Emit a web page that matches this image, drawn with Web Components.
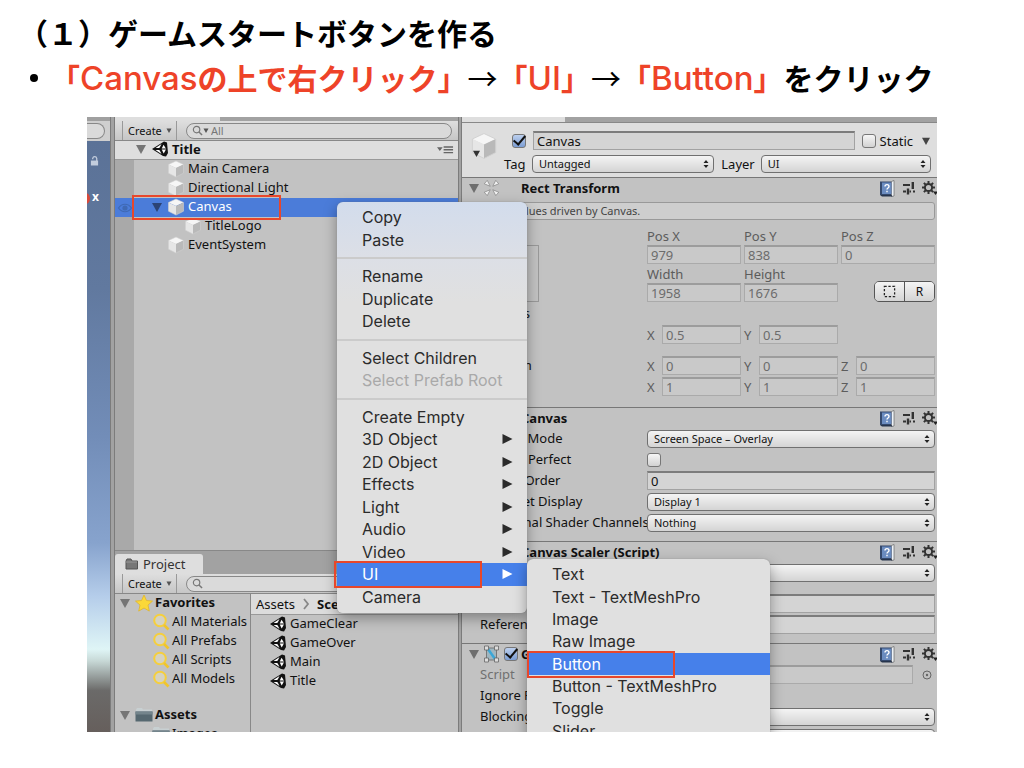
<!DOCTYPE html>
<html lang="ja">
<head>
<meta charset="utf-8">
<title>ゲームスタートボタンを作る</title>
<style>
  html, body { margin: 0; background: #fff; }
  body { font-family: "Noto Sans", "Noto Sans CJK JP", sans-serif; }
</style>
</head>
<body>
<lesson-slide>
  <span slot="heading">（１）ゲームスタートボタンを作る</span>
  <unity-editor></unity-editor>
</lesson-slide>

<script>
const define = (name, html, setup) => {
  const tpl = document.createElement('template');
  tpl.innerHTML = html;
  customElements.define(name, class extends HTMLElement {
    connectedCallback() {
      if (this.shadowRoot) return;
      const root = this.attachShadow({ mode: 'open' });
      root.append(tpl.content.cloneNode(true));
      if (setup) setup(root, this);
    }
  });
};

/* ---------- icons ---------- */
const ICONS = {
  cube: ['0 0 18 18', '<path d="M9 1 16.500 4.500 9 8 1.500 4.500z" fill="#f6f6f6"/><path d="M1.500 4.500 9 8v9L1.500 13.200z" fill="#e6e6e6"/><path d="M16.500 4.500 9 8v9l7.500-3.800z" fill="#b9b9b9"/><path d="M1.500 4.500 9 1l7.500 3.500v8.700L9 17l-7.500-3.800z" fill="none" stroke="#d0d0d0" stroke-width=".6"/>'],
  unity: ['0 0 18 18', '<path d="M1 9 13 1.500 16 2.500 17 13 15 16.500 12 16z" fill="#111"/><path d="M4.500 8 10.500 4 8.500 8zM4.500 10h4l2 4zM10.500 9 12.600 4.800 15.200 9l-2.500 4.500z" fill="#fff"/><path d="M10.500 9h4.700M8.500 8l2 1-2 1" stroke="#111" fill="none" stroke-width="1.200"/>'],
  tri: ['0 0 10 10', '<path d="M0 1h10L5 10z" fill="currentColor"/>'],
  magnifier: ['0 0 18 18', '<circle cx="8" cy="7.500" r="5.800" fill="#e8e2c0" fill-opacity=".5" stroke="#f5cf3c" stroke-width="2"/><path d="m12 12 4.500 4.500" stroke="#f0c52c" stroke-width="2.600"/>'],
  search: ['0 0 12 12', '<circle cx="5" cy="5" r="3.500" fill="none" stroke="#777" stroke-width="1.300"/><path d="m7.600 7.600 3.400 3.400" stroke="#777" stroke-width="1.600"/>'],
  star: ['0 0 18 18', '<path d="m9 1 2.500 5.500 6 .6-4.500 4 1.300 6L9 14l-5.300 3.100L5 11.100.5 7.100l6-.6z" fill="#fbd838" stroke="#e0b52a" stroke-width=".8"/>'],
  folder: ['0 0 18 18', '<path d="M1 3.500 2 2h5l1 1.500h9V15H1z" fill="#c8d0d2"/><path d="M0.500 5.500h17V15.500h-17z" fill="#566870"/><path d="M.5 5.500h17v3H.5z" fill="#74858c"/>'],
  tabfolder: ['0 0 14 14', '<path d="M1 4V12h11.500V4H7L6 2H2L1 4z" fill="#777" stroke="#555"/><path d="M1 5h11" stroke="#999"/>'],
  menu: ['0 0 18 10', '<path d="M0 2h6L3 6zM7 1h10v1.500H7zM7 4h10v1.500H7zM7 7h10v1.500H7z" fill="#666"/>'],
  rect: ['0 0 20 20', '<g fill="#f2f2f2" stroke="#888" stroke-width=".9"><path d="m1.500 5 3.500-4 3.500 7z"/><path d="m18.500 5-3.500-4-3.500 7z"/><path d="m1.500 15 3.500 4 3.500-7z"/><path d="m18.500 15-3.500 4-3.500-7z"/></g>'],
  raycast: ['0 0 16 18', '<path d="M3 3h10v12H3z" fill="#9fb6c0" stroke="#777"/><path d="m3 2 10 14" stroke="#3aa7d8" stroke-width="2.500"/><g fill="#ddd" stroke="#666" stroke-width=".8"><path d="M1 1h4v4H1zM11 1h4v4h-4zM1 13h4v4H1zM11 13h4v4h-4z"/></g>'],
  book: ['0 0 16 17', '<path d="M1 1.500h11.500V15H1z" fill="#35496c"/><path d="M12.500 1.500 15 .5V16l-2.500.5z" fill="#eef2f6" stroke="#555" stroke-width=".6"/><path d="M1 15h11.500l1 1.500H3z" fill="#26344c"/><path d="M3 2.500h9.500V14H3z" fill="#6b8cc0"/><path d="M6 6.500C6 4 10 4 10 6.500 10 8 8 8 8 9.600M8 10.800v1.400" fill="none" stroke="#fff" stroke-width="1.400"/>'],
  sliders: ['0 0 14 14', '<path d="M1 4h7M1 10.500h3M7.500 10.500H9M11 10.500h2" stroke="#333" stroke-width="2"/><path d="M10.800 1v7M6 7.500v6" stroke="#333" stroke-width="2.400"/>'],
  gear: ['0 0 15 15', '<circle cx="6.500" cy="6.500" r="3.600" fill="none" stroke="#333" stroke-width="2"/><path d="M6.500 0v2.500M6.500 10.500V13M0 6.500h2.500M10.500 6.500H13M1.900 1.900l1.800 1.800M9.300 9.300l1.800 1.800M1.900 11.100l1.800-1.800M9.300 3.700l1.800-1.800" stroke="#333" stroke-width="2"/><path d="M11 10.500h5l-2.500 3.500z" fill="#222"/>'],
  lock: ['0 0 10 12', '<path d="M1 5.500h8V11H1z" fill="#c3cddd"/><path d="M3 4V3a2.300 2.300 0 0 1 4.500 0v3" fill="none" stroke="#c3cddd" stroke-width="1.400"/>'],
  eye: ['0 0 14 10', '<path d="M0.500 5C4 0 10 0 13.500 5 10 10 4 10 .5 5z" fill="none" stroke="#3f69b4" stroke-width="1.200"/><circle cx="7" cy="5" r="2.600" fill="#3f69b4"/>'],
  target: ['0 0 10 10', '<circle cx="5" cy="5" r="4" fill="none" stroke="#666"/><circle cx="5" cy="5" r="1.200" fill="#666"/>'],
  dashed: ['0 0 14 14', '<path d="M1.500 1.500h11v11h-11z" fill="none" stroke="#222" stroke-width="1.400" stroke-dasharray="2.500 1.800"/>'],
  chevron: ['0 0 8 12', '<path d="m2 1 4 5-4 5" fill="none" stroke="#888" stroke-width="1.800"/>'],
  play: ['0 0 10 12', '<path d="M0 1v10l10-5z" fill="currentColor"/>'],
  updown: ['0 0 6 8', '<path d="M3 0 5.500 3h-5zM3 8 .5 5h5z" fill="#222"/>']
};
define('u-icon', '<style>:host{display:block;flex:none}svg{display:block;width:100%;height:100%;overflow:visible}</style>', (root, el) => {
  const [box, body] = ICONS[el.getAttribute('name')];
  root.innerHTML += `<svg viewBox="${box}" aria-hidden="true">${body}</svg>`;
});

/* ---------- form controls ---------- */
const CONTROLS = `
  input, select, button { font: inherit; color: inherit; margin: 0; box-sizing: border-box; min-width: 0; border-radius: 0; }
  input[type=text] { height: 19px; width: 100%; padding: 0 3px; background: #d4d4d4; border: 1px solid #a2a2a2; border-top: 2px solid #7c7c7c; }
  input[type=text]:disabled { background: #c9c9c9; border-color: #aaa; border-top: 2px solid #9c9c9c; color: #6c6c6c; }
  input[type=checkbox] { appearance: none; width: 14px; height: 14px; flex: none; border: 1px solid #777; border-radius: 3px; background: linear-gradient(#f6f6f6,#d2d2d2); }
  input[type=checkbox]:checked { background: linear-gradient(#bdd0ee,#7c9ed4); position: relative; }
  input[type=checkbox]:checked::after { content: ""; position: absolute; left: 3px; top: -2px; width: 5px; height: 10px; border: solid #111; border-width: 0 2px 2px 0; transform: rotate(40deg); }
`;
define('popup-select', `<style>${CONTROLS}
  :host{display:grid;align-items:center;min-width:0;height:18px;font-size:11px}
  select{grid-area:1/1;appearance:none;height:18px;width:100%;padding:0 6px;border:1px solid #707070;border-radius:4px;background:linear-gradient(#f4f4f4,#d4d4d4);color:#111;line-height:14px}
  u-icon{grid-area:1/1;justify-self:end;margin-right:5px;width:6px;height:8px;pointer-events:none}
  </style><select><option></option></select><u-icon name="updown"></u-icon>`, (root, el) => {
  root.querySelector('option').textContent = el.getAttribute('value') || '';
  root.querySelector('select').setAttribute('aria-label', el.getAttribute('label'));
});
define('axis-field', `<style>${CONTROLS}
  :host{display:flex;min-width:0;color:#5c5c5c}
  label{display:flex;align-items:center;width:100%;height:19px;line-height:18px}
  span{width:15px;flex:none}
  :host([stacked]) label{flex-direction:column;align-items:stretch;height:auto}
  :host([stacked]) span{width:auto;height:19px;line-height:20px}
  </style><label><span></span><input type="text" disabled></label>`, (root, el) => {
  root.querySelector('span').textContent = el.getAttribute('label');
  root.querySelector('input').value = el.getAttribute('value');
});
define('prop-row', `<style>${CONTROLS}
  :host{display:grid;grid-template-columns:167px minmax(0,1fr);align-items:center;height:21px;padding:0 2px 0 18px}
  label{white-space:nowrap;overflow:hidden;line-height:19px}
  :host([indent]) label{padding-left:16px}
  :host([dim]) label{color:#707070}
  .obj{display:flex;align-items:center;gap:9px;padding-right:3px}
  u-icon{width:10px;height:10px}
  </style><label for="f"></label>`, (root, el) => {
  root.querySelector('label').textContent = el.getAttribute('label');
  const v = el.getAttribute('value') || '';
  const t = document.createElement('template');
  t.innerHTML = {
    select: `<popup-select label="${el.getAttribute('label')}" value="${v}"></popup-select>`,
    text: `<input id="f" type="text" value="${v}">`,
    check: `<input id="f" type="checkbox">`,
    object: `<div class="obj"><input id="f" type="text" disabled value="${v}"><u-icon name="target"></u-icon></div>`
  }[el.getAttribute('kind')];
  root.append(t.content);
});

/* ---------- inspector ---------- */
define('component-section', `<style>${CONTROLS}
  :host{display:block;border-top:1px solid #777;padding-bottom:8px}
  header{display:flex;align-items:center;height:20px;padding-left:7px;line-height:20px}
  h3{margin:0;font-size:13px;flex:1;white-space:nowrap}
  .lead{display:flex;align-items:center;gap:4px;width:52px}
  .tri{width:10px;height:10px;color:#6e6e6e}
  .kind{width:17px;height:18px}
  .book{width:16px;height:17px;margin-right:7px}.sl{width:14px;height:14px;margin-right:6px}.gear{width:15px;height:15px}
  </style><header><span class="lead"><u-icon class="tri" name="tri"></u-icon></span><h3></h3>
  <u-icon class="book" name="book"></u-icon><u-icon class="sl" name="sliders"></u-icon><u-icon class="gear" name="gear"></u-icon></header><slot></slot>`, (root, el) => {
  root.querySelector('h3').textContent = el.getAttribute('title-text');
  const lead = root.querySelector('.lead');
  if (el.hasAttribute('icon')) lead.insertAdjacentHTML('beforeend', `<u-icon class="kind" name="${el.getAttribute('icon')}"></u-icon>`);
  if (el.hasAttribute('toggle')) lead.insertAdjacentHTML('beforeend', '<input type="checkbox" checked aria-label="Enabled">');
});
define('inspector-panel', `<style>${CONTROLS}
  :host{display:block;background:#c2c2c2;overflow:hidden;font-size:13px;color:#111}
  .strip{height:5px;border-bottom:1px solid #888;background:linear-gradient(90deg,#dedede 103px,#a2a2a2 103px)}
  .head{display:grid;grid-template-columns:34px minmax(0,1fr);height:54px;background:#dedede;padding-left:8px;box-sizing:border-box}
  .cube{position:relative;width:28px;height:30px;margin-top:9px}
  .cube u-icon{width:28px;height:28px}.cube .t{position:absolute;left:2px;top:18px;width:9px;height:7px;color:#333}
  .line{display:flex;align-items:center;height:19px}
  .lines{display:grid;align-content:start;gap:4px;padding:8px 6px 0 0}
  .lines input[type=text]{flex:1;margin:0 7px}
  .line:first-child{padding-left:8px}
  .line label{display:flex;align-items:center;gap:4px}
  .caret{width:10px;height:8px;margin-left:8px;color:#444}
  .tag{width:22px}
  .tagsel{flex:182;margin:0 7px 0 6px}.laysel{flex:170;margin-left:6px}
  .help{margin:4px 2px 6px 18px;height:18px;line-height:16px;font-size:11px;padding-left:1px;border:1px solid #999;border-radius:3px;background:#cecece;color:#444;box-sizing:border-box}
  .body{display:grid;grid-template-columns:167px minmax(0,1fr);padding:0 2px 3px 18px}
  .anchor{width:57px;height:57px;border:1px solid #999;margin:19px 0 0 2px;box-sizing:border-box}
  .cells{display:grid;grid-template-columns:repeat(3,minmax(0,1fr));gap:0 3px}
  .modes{display:flex;justify-self:end;align-self:end;box-sizing:border-box;width:61px;height:21px;border:1px solid #555;border-radius:5px;overflow:hidden}
  .modes button{flex:1;border:0;padding:0;background:linear-gradient(#f4f4f4,#d4d4d4);display:grid;place-items:center;font-size:12px;line-height:18px}
  .modes button+button{border-left:1px solid #555}.modes u-icon{width:13px;height:13px}
  .cap{grid-column:1;line-height:19px;height:19px}.row3{margin-top:2px}
  .wide{grid-column:1/-1;height:19px;line-height:19px}
  .gap{margin-top:12px}
  .spacer{height:10px}
  </style>
  <div class="strip"></div>
  <div class="head">
    <div class="cube"><u-icon name="cube"></u-icon><u-icon class="t" name="tri"></u-icon></div>
    <div class="lines">
      <div class="line"><input type="checkbox" checked aria-label="Active"><input type="text" value="Canvas" aria-label="Name"><label><input type="checkbox">Static</label><u-icon class="caret" name="tri"></u-icon></div>
      <div class="line"><label class="tag">Tag</label><popup-select class="tagsel" label="Tag" value="Untagged"></popup-select><label>Layer</label><popup-select class="laysel" label="Layer" value="UI"></popup-select></div>
    </div>
  </div>
  <component-section title-text="Rect Transform" icon="rect">
    <div class="help">Some values driven by Canvas.</div>
    <div class="body">
      <div class="anchor"></div>
      <div class="cells">
        <axis-field stacked label="Pos X" value="979"></axis-field><axis-field stacked label="Pos Y" value="838"></axis-field><axis-field stacked label="Pos Z" value="0"></axis-field>
        <axis-field stacked label="Width" value="1958"></axis-field><axis-field stacked label="Height" value="1676"></axis-field>
        <div class="modes"><button aria-label="Blueprint mode"><u-icon name="dashed"></u-icon></button><button>R</button></div>
      </div>
      <div class="wide row3">Anchors</div>
      <div class="cap row3">Pivot</div>
      <div class="cells row3"><axis-field label="X" value="0.5"></axis-field><axis-field label="Y" value="0.5"></axis-field></div>
      <div class="cap gap">Rotation</div>
      <div class="cells gap"><axis-field label="X" value="0"></axis-field><axis-field label="Y" value="0"></axis-field><axis-field label="Z" value="0"></axis-field></div>
      <div class="cap row3"></div>
      <div class="cells row3"><axis-field label="X" value="1"></axis-field><axis-field label="Y" value="1"></axis-field><axis-field label="Z" value="1"></axis-field></div>
    </div>
  </component-section>
  <component-section title-text="Canvas">
    <prop-row kind="select" label="Render Mode" value="Screen Space – Overlay"></prop-row>
    <prop-row kind="check" indent label="Pixel Perfect"></prop-row>
    <prop-row kind="text" indent label="Sort Order" value="0"></prop-row>
    <prop-row kind="select" indent label="Target Display" value="Display 1"></prop-row>
    <prop-row kind="select" label="Additional Shader Channels" value="Nothing"></prop-row>
  </component-section>
  <component-section title-text="Canvas Scaler (Script)">
    <prop-row kind="select" label=""></prop-row>
    <div class="spacer"></div>
    <prop-row kind="text" label=""></prop-row>
    <prop-row kind="text" label="Reference"></prop-row>
  </component-section>
  <component-section title-text="Graphic Raycaster" icon="raycast" toggle>
    <prop-row kind="object" dim label="Script" value="GraphicRaycaster"></prop-row>
    <prop-row kind="check" label="Ignore Reversed"></prop-row>
    <prop-row kind="select" label="Blocking Objects"></prop-row>
    <prop-row kind="select" label=""></prop-row>
  </component-section>`);

/* ---------- hierarchy and project ---------- */
define('panel-toolbar', `<style>
  :host{display:flex;align-items:center;gap:9px;height:20px;padding:0 6px 0 7px;box-sizing:border-box;background:linear-gradient(#dedede,#c6c6c6);border-bottom:1px solid #888;font-size:11px}
  button{font:inherit;display:flex;align-items:center;justify-content:space-between;width:55px;height:19px;padding:0 4px 0 5px;border:solid #999;border-width:0 1px;background:none;color:#111;box-sizing:border-box}
  .c{width:6px;height:5px;color:#555}
  label{flex:1;display:flex;align-items:center;height:16px;padding:0 5px;border:1px solid #888;border-radius:9px;background:#dadada;box-sizing:border-box;min-width:0}
  .s{width:11px;height:11px}
  input{font:inherit;border:0;padding:0 2px;background:none;flex:1;min-width:0;height:14px;color:#777;outline:0}
  </style><button>Create<u-icon class="c" name="tri"></u-icon></button><label><u-icon class="s" name="search"></u-icon><input type="text" aria-label="Search"></label>`, (root, el) => {
  const v = el.getAttribute('query');
  if (v) { root.querySelector('input').value = v; root.querySelector('.s').insertAdjacentHTML('afterend', '<u-icon class="c" name="tri"></u-icon>'); }
});
define('tree-row', `<style>
  :host{display:flex;align-items:center;height:19px;box-sizing:border-box;padding-bottom:2px;line-height:17px;white-space:nowrap;padding-left:calc(var(--level,0)*17px)}
  .t{width:10px;height:10px;margin:0 5px 0 2px;color:#757575;visibility:hidden}
  :host([open]) .t{visibility:visible}
  :host([selected]) .t{color:#2c4374}
  .i{width:18px;height:18px;margin-right:var(--icon-gap,2px)}
  :host([bold]){font-weight:700}
  </style><u-icon class="t" name="tri"></u-icon><slot></slot>`, (root, el) => {
  root.querySelector('.t').insertAdjacentHTML('afterend', `<u-icon class="i" name="${el.getAttribute('icon')}"></u-icon>`);
  el.style.setProperty('--level', el.getAttribute('level') || 0);
});
define('hierarchy-panel', `<style>
  :host{display:flex;flex-direction:column;font-size:13px;color:#111;min-height:0;background:#c2c2c2;border-bottom:1px solid #888;--icon-gap:3px}
  .strip{height:4px;background:linear-gradient(90deg,#dedede 105px,#a2a2a2 105px)}
  .scene{display:flex;align-items:center;justify-content:space-between;height:19px;background:#dedede;border-bottom:1px solid #999;box-sizing:border-box;padding:0 4px 0 19px}
  .scene u-icon{width:17px;height:10px}
  .list{flex:1;padding-top:0;background:linear-gradient(90deg,#a9a9a9 19px,transparent 19px)}
  .list>tree-row{margin-left:1px}
  .sel{background:#4b7cd9;color:#fff;display:flex;padding-left:3px;align-items:center}
  .eye{width:14px;height:10px;margin-right:18px}
  </style>
  <div class="strip"></div>
  <panel-toolbar query="All"></panel-toolbar>
  <div class="scene"><tree-row icon="unity" open bold>Title</tree-row><u-icon name="menu"></u-icon></div>
  <div class="list">
    <tree-row icon="cube" level="2">Main Camera</tree-row>
    <tree-row icon="cube" level="2">Directional Light</tree-row>
    <div class="sel"><u-icon class="eye" name="eye"></u-icon><tree-row icon="cube" open selected>Canvas</tree-row></div>
    <tree-row icon="cube" level="3">TitleLogo</tree-row>
    <tree-row icon="cube" level="2">EventSystem</tree-row>
  </div>`);
define('project-panel', `<style>
  :host{display:flex;flex-direction:column;font-size:13px;color:#111;min-height:0;overflow:hidden;background:#a2a2a2}
  .tabs{height:20px;padding-top:3px}
  .tab{display:flex;align-items:center;gap:4px;width:88px;height:20px;padding-left:10px;box-sizing:border-box;background:#dedede;border-radius:3px 3px 0 0;line-height:19px;color:#333}
  .tab u-icon{width:14px;height:14px}
  .cols{flex:1;display:grid;grid-template-columns:135px minmax(0,1fr);background:#c2c2c2;min-height:0}
  .cols>div{overflow:hidden}
  .files{border-left:1px solid #888;--icon-gap:3px}
  .files tree-row{margin-left:1px}
  .space{height:17px}
  nav{display:flex;align-items:center;gap:7px;height:20px;padding-left:5px;background:#dcdcdc;border-bottom:1px solid #999;white-space:nowrap}
  nav a{color:inherit;text-decoration:none}nav u-icon{width:8px;height:12px}
  .left tree-row{margin-left:3px}
  </style>
  <div class="tabs"><div class="tab"><u-icon name="tabfolder"></u-icon>Project</div></div>
  <panel-toolbar></panel-toolbar>
  <div class="cols">
    <div class="left">
      <tree-row icon="star" open bold>Favorites</tree-row>
      <tree-row icon="magnifier" level="1">All Materials</tree-row>
      <tree-row icon="magnifier" level="1">All Prefabs</tree-row>
      <tree-row icon="magnifier" level="1">All Scripts</tree-row>
      <tree-row icon="magnifier" level="1">All Models</tree-row>
      <div class="space"></div>
      <tree-row icon="folder" open bold>Assets</tree-row>
      <tree-row icon="folder" level="1">Images</tree-row>
    </div>
    <div class="files">
      <nav><a href="#assets">Assets</a><u-icon name="chevron"></u-icon><a href="#scenes"><b>Scenes</b></a></nav>
      <tree-row icon="unity">GameClear</tree-row>
      <tree-row icon="unity">GameOver</tree-row>
      <tree-row icon="unity">Main</tree-row>
      <tree-row icon="unity">Title</tree-row>
    </div>
  </div>`);

/* ---------- context menus ---------- */
define('menu-item', `<style>
  :host{flex:1 1 0;min-height:0;display:flex;position:relative}
  button{flex:1;display:flex;align-items:center;justify-content:space-between;font:inherit;line-height:20px;color:#2b2b2b;background:none;border:0;padding:0 14px 0 25px;text-align:left;white-space:nowrap;min-height:0}
  button:disabled{color:#a9a9a9}
  :host([active]) button{background:#4680ea;color:#fff}
  u-icon{width:11px;height:12px}
  :host([marked])::after{content:"";position:absolute;left:var(--mark-left,-3px);top:-2px;width:144px;height:23px;border:2px solid #e8472b}
  </style><button role="menuitem"><slot></slot></button>`, (root, el) => {
  const b = root.querySelector('button');
  b.disabled = el.hasAttribute('disabled');
  if (el.hasAttribute('sub')) b.insertAdjacentHTML('beforeend', '<u-icon name="play"></u-icon>');
});
define('context-menu', `<style>
  :host{display:flex;flex-direction:column;box-sizing:border-box;padding:4px 0 5px;border-radius:6px;background:#e0e0e0;font:16px Inter,"Liberation Sans",sans-serif;box-shadow:0 0 1px #777,0 5px 14px rgba(0,0,0,.35)}
  ::slotted(hr){flex:none;box-sizing:border-box;width:100%;height:14px;margin:0;border:solid transparent;border-width:6px 0;background:#cbcbcb;background-clip:padding-box}
  </style><slot></slot>`);

/* ---------- editor frame ---------- */
define('unity-editor', `<style>
  :host{display:grid;grid-template-columns:23px 5px 343px 4px minmax(0,1fr);position:relative;overflow:hidden;aspect-ratio:850/615;background:#a0a0a0;font-family:"Noto Sans",sans-serif}
  .scene{display:grid;grid-template-rows:4px 20px 1fr;min-height:0}
  .scene .bar{background:#cfcfcf;display:flex;align-items:center}
  .scene .bar i{width:17px;height:14px;border:1px solid #888;border-left:0;border-radius:0 9px 9px 0;background:#dadada}
  .view{background:linear-gradient(#5b7297 0,#61799f 25%,#728db8 50%,#87a3cd 68%,#b5cdea 77%,#dff5f6 86%,#c7d8d6 88%,#6b6a69 93%,#665f5c 100%);display:flex;flex-direction:column;align-items:flex-end;gap:22px;padding:14px 11px 0 0;color:#fff;font-weight:700;font-size:12px;line-height:16px}
  .view u-icon{width:9px;height:12px}
  .view span{position:relative}
  .view span::before{content:"";position:absolute;right:9px;top:4px;width:9px;height:11px;border-radius:50%;background:#d9493a}
  .mid{display:grid;grid-template-rows:434px minmax(0,1fr);min-height:0}
  .rail{background:#a2a2a2;border:solid #7c7c7c;border-width:0 1px}
  .m1{position:absolute;left:250px;top:85px;width:190px;height:411px;background:linear-gradient(#d2dcec 0,#dcdfe6 55px,#e0e0e0 100px)}
  .m2{position:absolute;left:440px;top:442px;width:243px;height:188px;--mark-left:0px}
  .mark{position:absolute;left:45px;top:78px;width:145px;height:21px;border:2px solid #e8472b}
  inspector-panel{min-height:0}
  </style>
  <div class="scene"><div></div><div class="bar"><i></i></div><div class="view"><u-icon name="lock"></u-icon><span>x</span></div></div>
  <div class="rail"></div>
  <div class="mid"><hierarchy-panel></hierarchy-panel><project-panel></project-panel></div>
  <div class="rail"></div>
  <inspector-panel></inspector-panel>
  <div class="mark"></div>
  <context-menu class="m1" role="menu">
    <menu-item>Copy</menu-item><menu-item>Paste</menu-item><hr>
    <menu-item>Rename</menu-item><menu-item>Duplicate</menu-item><menu-item>Delete</menu-item><hr>
    <menu-item>Select Children</menu-item><menu-item disabled>Select Prefab Root</menu-item><hr>
    <menu-item>Create Empty</menu-item><menu-item sub>3D Object</menu-item><menu-item sub>2D Object</menu-item><menu-item sub>Effects</menu-item><menu-item sub>Light</menu-item><menu-item sub>Audio</menu-item><menu-item sub>Video</menu-item><menu-item sub active marked>UI</menu-item><menu-item>Camera</menu-item>
  </context-menu>
  <context-menu class="m2" role="menu">
    <menu-item>Text</menu-item><menu-item>Text - TextMeshPro</menu-item><menu-item>Image</menu-item><menu-item>Raw Image</menu-item><menu-item active marked>Button</menu-item><menu-item>Button - TextMeshPro</menu-item><menu-item>Toggle</menu-item><menu-item>Slider</menu-item>
  </context-menu>`);

define('lesson-slide', `<style>
  :host{display:block;padding:10px 0 36px;color:#000;font:700 30px/44px "Noto Sans CJK JP",sans-serif;text-spacing-trim:space-all}
  h1{margin:0 18px;font:inherit;line-height:45px;white-space:nowrap}
  ul{margin:0 0 18px;padding:0;list-style:none}
  li{display:flex;white-space:nowrap;padding-left:29px}
  li::before{content:"";flex:none;width:8px;height:8px;border-radius:50%;background:#000;margin:19px 12px 0 1px}
  em{font-style:normal;color:#ee4328}
  em span{font:500 33px/30px Inter,"Liberation Sans",sans-serif}
  i{font-style:normal;font-weight:400}
  ::slotted(unity-editor){margin:0 87px;line-height:normal;font-weight:400;text-spacing-trim:normal}
  </style>
  <h1><slot name="heading"></slot></h1>
  <ul><li><div><em>「<span>Canvas</span>の上で右クリック」</em><i>→</i><em>「<span>UI</span>」</em><i>→</i><em>「<span>Button</span>」</em>をクリック</div></li></ul>
  <slot></slot>`);
</script>
</body>
</html>
